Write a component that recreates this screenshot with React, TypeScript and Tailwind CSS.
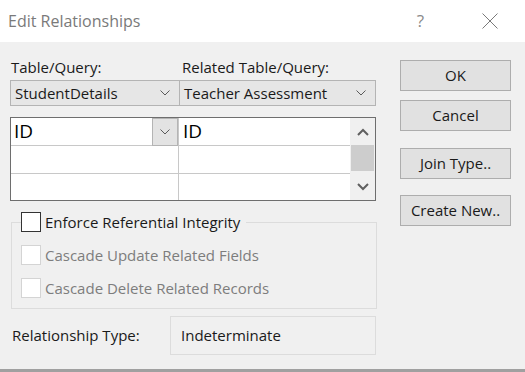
import React from "react";

const font = { fontFamily: '"Open Sans", "Noto Sans", sans-serif' };

function Chevron({ className = "" }: { className?: string }) {
  return (
    <svg width="10" height="6" viewBox="0 0 10 6" className={className}>
      <path d="M0.5 0.5 L5 5 L9.5 0.5" fill="none" stroke="#5a5a5a" strokeWidth="1" />
    </svg>
  );
}

function Combo({ label, w }: { label: string; w: string }) {
  return (
    <div className={`${w} h-[26px] flex items-center justify-between bg-[#e6e6e6] border border-[#b4b4b4] pl-[4px] pr-[9px] text-[15px] text-[#1a1a1a]`}>
      <span>{label}</span>
      <Chevron />
    </div>
  );
}

function Btn({ label, className = "" }: { label: string; className?: string }) {
  return (
    <div className={`w-[111px] h-[31px] flex items-center justify-center bg-[#e1e1e1] border border-[#adadad] text-[15px] text-[#1a1a1a] ${className}`}>
      {label}
    </div>
  );
}

function Check({ label, disabled }: { label: string; disabled?: boolean }) {
  return (
    <div className="flex items-center gap-[4px] h-[20px]">
      <div className={`w-[20px] h-[20px] bg-white border ${disabled ? "border-[#d4d4d4]" : "border-[#333333]"}`} />
      <span className={`text-[15px] ${disabled ? "text-[#7d7d7d]" : "text-[#1a1a1a]"}`}>{label}</span>
    </div>
  );
}

export default function App() {
  return (
    <div style={font} className="w-[525px] h-[372px] bg-[#f0f0f0] flex flex-col overflow-hidden">
      {/* title bar */}
      <div className="h-[42px] bg-white flex items-center pl-[8px] shrink-0">
        <span className="text-[16px] text-[#7a7a7a]">Edit Relationships</span>
        <span className="ml-auto mr-[58px] text-[17px] text-[#8a8a8a]">?</span>
        <svg width="16" height="16" viewBox="0 0 16 16" className="mr-[27px]">
          <path d="M0.5 0.5 L15.5 15.5 M15.5 0.5 L0.5 15.5" stroke="#7a7a7a" strokeWidth="1" />
        </svg>
      </div>

      <div className="flex flex-1">
        {/* left column */}
        <div className="w-[367px] ml-[10px] flex flex-col">
          <div className="flex h-[38px] items-end pb-[2px] text-[15px] text-[#1a1a1a]">
            <span className="w-[170px] pl-[1px]">Table/Query:</span>
            <span className="pl-[2px]">Related Table/Query:</span>
          </div>
          <div className="flex">
            <Combo label="StudentDetails" w="w-[170px]" />
            <Combo label="Teacher Assessment" w="w-[197px] -ml-[1px]" />
          </div>

          {/* grid */}
          <div className="mt-[11px] w-[366px] h-[84px] border border-[#6e6e6e] bg-white flex">
            <div className="flex-1 flex flex-col">
              <div className="h-[28px] flex border-b border-[#c8c8c8]">
                <div className="w-[168px] flex items-center justify-between border-r border-[#c8c8c8] pl-[3px]">
                  <span className="text-[19px] text-black">ID</span>
                  <div className="w-[26px] h-[28px] bg-[#e3e3e3] border border-[#b4b4b4] flex items-center justify-center">
                    <Chevron />
                  </div>
                </div>
                <div className="flex-1 flex items-center pl-[4px]">
                  <span className="text-[19px] text-black">ID</span>
                </div>
              </div>
              <div className="h-[28px] flex border-b border-[#c8c8c8]">
                <div className="w-[168px] border-r border-[#c8c8c8]" />
              </div>
              <div className="flex-1 flex">
                <div className="w-[168px] border-r border-[#c8c8c8]" />
              </div>
            </div>
            {/* scrollbar */}
            <div className="w-[25px] bg-[#f0f0f0] flex flex-col items-center">
              <div className="h-[27px] flex items-center justify-center">
                <svg width="12" height="8" viewBox="0 0 12 8">
                  <path d="M1 7 L6 2 L11 7" fill="none" stroke="#606060" strokeWidth="2" />
                </svg>
              </div>
              <div className="w-[23px] h-[26px] bg-[#cdcdcd]" />
              <div className="flex-1 flex items-center justify-center pt-[2px]">
                <svg width="12" height="8" viewBox="0 0 12 8">
                  <path d="M1 1 L6 6 L11 1" fill="none" stroke="#606060" strokeWidth="2" />
                </svg>
              </div>
            </div>
          </div>

          {/* group */}
          <fieldset className="mt-[11px] ml-[1px] w-[366px] h-[97px] border border-[#dcdcdc] pl-[9px] pr-0 pb-0 pt-0 m-0">
            <legend className="p-0 pr-[6px]">
              <Check label="Enforce Referential Integrity" />
            </legend>
            <div className="mt-[13px] flex flex-col gap-[13px]">
              <Check label="Cascade Update Related Fields" disabled />
              <Check label="Cascade Delete Related Records" disabled />
            </div>
          </fieldset>

          <div className="mt-[7px] flex items-center">
            <span className="w-[160px] pl-[2px] text-[15px] text-[#1a1a1a]">Relationship Type:</span>
            <div className="w-[206px] h-[39px] border border-[#dcdcdc] flex items-center pl-[10px] text-[15px] text-[#1a1a1a]">
              Indeterminate
            </div>
          </div>
        </div>

        {/* right column */}
        <div className="ml-[23px] pt-[18px] flex flex-col">
          <Btn label="OK" />
          <Btn label="Cancel" className="mt-[9px]" />
          <Btn label="Join Type.." className="mt-[17px]" />
          <Btn label="Create New.." className="mt-[16px]" />
        </div>
      </div>

      <div className="h-[3px] bg-[#a0a0a0] shrink-0" />
    </div>
  );
}
